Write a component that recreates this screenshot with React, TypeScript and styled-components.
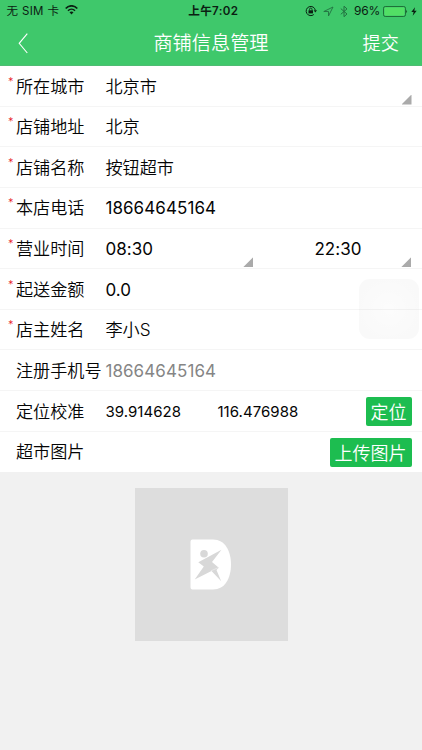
import React from 'react';
import styled, { createGlobalStyle } from 'styled-components';

const GlobalStyle = createGlobalStyle`
  * { box-sizing: border-box; }
  body {
    margin: 0;
    background: #f1f1f1;
    font-family: Inter, "Noto Sans CJK SC", sans-serif;
    color: #050505;
    overflow: hidden;
  }
`;

const Screen = styled.div`
  position: relative;
  width: 422px;
  height: 750px;
  background: #f1f1f1;
  white-space: nowrap;
`;

const Header = styled.header`
  height: 66px;
  background: #3fc86b;
  border-bottom: 1px solid #4fbc73;
`;

const StatusBar = styled.div`
  height: 22px;
  display: grid;
  grid-template-columns: 1fr auto 1fr;
  align-items: center;
  padding: 0 5px 0 6.5px;
  font-size: 11.5px;
  line-height: 22px;
  color: #0b2012;
`;

const Carrier = styled.div`
  display: flex;
  align-items: center;
  gap: 6px;
  letter-spacing: 0.35px;
  svg { margin-top: -2px; }
`;

const Clock = styled.div`
  font-weight: 600;
  font-size: 11.6px;
  letter-spacing: 0.3px;
  padding-left: 3px;
`;

const Indicators = styled.div`
  display: flex;
  align-items: center;
  justify-content: flex-end;
  gap: 6px;
`;

const Power = styled.div`
  display: flex;
  align-items: center;
  gap: 3px;
`;

const Percent = styled.span`
  font-size: 12px;
  letter-spacing: -0.2px;
`;

const NavBar = styled.nav`
  height: 43px;
  display: grid;
  grid-template-columns: 76px 1fr 76px;
  align-items: center;
  color: #fff;
  font-weight: 350;
`;

const Back = styled.button`
  display: flex;
  border: 0;
  background: none;
  padding: 0 0 0 18px;
`;

const Title = styled.h1`
  margin: 0;
  font-size: 19.2px;
  line-height: 38px;
  padding-bottom: 2px;
  font-weight: inherit;
  text-align: center;
`;

const Submit = styled.span`
  font-size: 18.2px;
  line-height: 38px;
  padding: 0 0 2px 16.5px;
`;

const Form = styled.main`
  display: grid;
  grid-template-rows: repeat(10, 40.65px);
  background: #fff;
`;

const Row = styled.section`
  display: grid;
  grid-template-columns: 89.5px 1fr;
  align-items: center;
  padding: 0 10.5px 0 15.9px;
  border-bottom: 1px solid #f5f5f5;
  &:last-child { border-bottom: 0; }
`;

const Label = styled.label<{ $required?: boolean }>`
  position: relative;
  font-size: 17.15px;
  font-weight: 350;
  line-height: 40px;
  padding-top: 0.5px;
  &::before {
    content: ${p => (p.$required ? '"*"' : 'none')};
    position: absolute;
    left: -8px;
    top: -2.5px;
    font-size: 11px;
    line-height: 36px;
    color: #e60f18;
  }
`;

const Fields = styled.div`
  display: flex;
  align-items: center;
  height: 100%;
`;

const Value = styled.span<{ $muted?: boolean; $width?: number; $indent?: number; $small?: boolean; $latin?: boolean }>`
  width: ${p => (p.$width ? `${p.$width}px` : 'auto')};
  flex: ${p => (p.$width ? 'none' : '1')};
  padding: 0.5px 0 0 ${p => p.$indent ?? 0}px;
  font-size: ${p => (p.$small ? '15px' : p.$latin ? '17px' : '17.15px')};
  font-weight: ${p => (p.$latin || p.$small ? 400 : 350)};
  letter-spacing: ${p => (p.$small ? '0.05px' : p.$latin ? '0.08px' : '0')};
  line-height: 40px;
  color: ${p => (p.$muted ? '#858585' : 'inherit')};
`;

const Corner = styled.i`
  align-self: flex-end;
  width: 10px;
  height: 10px;
  margin-bottom: 2px;
  background: #aaa;
  clip-path: polygon(100% 0, 100% 100%, 0 100%);
`;

const Action = styled.button<{ $width: number }>`
  width: ${p => p.$width}px;
  height: 29px;
  margin-left: auto;
  padding: 0;
  border: 0;
  border-radius: 2px;
  background: #1dbd50;
  color: #fff;
  font: 350 18px/28px "Noto Sans CJK SC", sans-serif;
`;

const AssistiveTouch = styled.div`
  position: absolute;
  left: 359px;
  top: 279px;
  width: 60px;
  height: 60px;
  border-radius: 11px;
  background: radial-gradient(circle, rgba(0, 0, 0, 0.012), rgba(0, 0, 0, 0.026));
`;

const Preview = styled.figure`
  width: 153px;
  height: 153px;
  margin: 16px auto 0;
  background: #ddd;
  display: flex;
  align-items: center;
  justify-content: center;
`;

const WifiIcon = () => (
  <svg width="13" height="10" viewBox="0 0 13 10" fill="none" stroke="#0b2012">
    <path d="M.7 3.5C4-.1 9-.1 12.3 3.5" strokeWidth="1.7" />
    <path d="M3 5.7C5 3.7 8 3.7 10 5.7" strokeWidth="1.6" />
    <path d="M4.5 7.3C5.7 6.3 7.3 6.3 8.5 7.3L6.5 9.4Z" fill="#0b2012" stroke="none" />
  </svg>
);

const LockIcon = () => (
  <svg width="12" height="12" viewBox="0 0 12 12" fill="none" stroke="#0b2012">
    <path d="M8.8 9.5A4.6 4.6 0 1 1 10.3 5.2" strokeWidth="1" />
    <path d="M8.7 5.2H12L10.3 7.6Z" fill="#0b2012" stroke="none" />
    <path d="M3.5 5.3H8V8.4H3.5Z" fill="#0b2012" stroke="none" />
    <path d="M4.5 5.4V4.3a1.25 1.25 0 0 1 2.5 0V5.4" strokeWidth=".8" />
  </svg>
);

const LocationIcon = () => (
  <svg width="11" height="11" viewBox="0 0 11 11" fill="none" stroke="#227141" strokeWidth=".9">
    <path d="M.8 5.5L10 1L5.5 10V5.5Z" />
  </svg>
);

const BluetoothIcon = () => (
  <svg width="8" height="13" viewBox="0 0 8 13" fill="none" stroke="#227141" strokeWidth="1">
    <path d="M.8 3.6L7 9L4 11.7V1.2L7 3.9L.8 9.3" />
  </svg>
);

const BatteryIcon = () => (
  <svg width="25" height="11" viewBox="0 0 25 11">
    <rect x=".5" y=".5" width="22" height="10" rx="1.8" fill="none" stroke="#155b2c" strokeWidth=".8" />
    <rect x="1.6" y="1.6" width="19.8" height="7.8" rx=".8" fill="#52df65" />
    <path d="M23.4 3.8Q24.8 5.5 23.4 7.2Z" fill="#0b2012" />
  </svg>
);

const BoltIcon = () => (
  <svg width="6" height="9" viewBox="0 0 6 9">
    <path d="M4 .3L.3 5H2.6L1.7 8.7L5.7 3.7H3.3Z" fill="#0b2012" />
  </svg>
);

const BackIcon = () => (
  <svg width="11" height="21" viewBox="0 0 11 21" fill="none" stroke="#fff" strokeWidth="1.1">
    <path d="M9.3 .7L1.2 10.3L9.3 20" />
  </svg>
);

const BrandMark = () => (
  <svg width="42" height="51" viewBox="0 0 42 51">
    <path d="M2.5.5H23C35 .5 41 12 41 25.5S35 50.5 23 50.5H2.5Q.5 50.5.5 48.5V2.5Q.5.5 2.5.5Z" fill="#fff" />
    <g fill="#d8d8d8">
      <circle cx="14" cy="14.7" r="3.8" />
      <path d="M8.3 23.3L31.5 10.7L22 23L28.8 28.8L26.5 31L31.2 42.2L21.5 32L4.7 40.5L13.8 27.4Z" />
    </g>
    <path d="M21 31.8L28 28.8" stroke="#f1f1f1" strokeWidth=".6" />
  </svg>
);

export default function App() {
  return (
    <Screen>
      <GlobalStyle />
      <Header>
        <StatusBar>
          <Carrier>无 SIM 卡<WifiIcon /></Carrier>
          <Clock>上午7:02</Clock>
          <Indicators>
            <LockIcon /><LocationIcon /><BluetoothIcon />
            <Power><Percent>96%</Percent><BatteryIcon /><BoltIcon /></Power>
          </Indicators>
        </StatusBar>
        <NavBar>
          <Back aria-label="返回"><BackIcon /></Back>
          <Title>商铺信息管理</Title>
          <Submit>提交</Submit>
        </NavBar>
      </Header>
      <Form>
        <Row><Label $required>所在城市</Label><Fields><Value>北京市</Value><Corner /></Fields></Row>
        <Row><Label $required>店铺地址</Label><Fields><Value>北京</Value></Fields></Row>
        <Row><Label $required>店铺名称</Label><Fields><Value>按钮超市</Value></Fields></Row>
        <Row><Label $required>本店电话</Label><Fields><Value $latin>18664645164</Value></Fields></Row>
        <Row>
          <Label $required>营业时间</Label>
          <Fields>
            <Value $latin $width={138}>08:30</Value><Corner />
            <Value $latin $width={148} $indent={61}>22:30</Value><Corner />
          </Fields>
        </Row>
        <Row><Label $required>起送金额</Label><Fields><Value $latin>0.0</Value></Fields></Row>
        <Row><Label $required>店主姓名</Label><Fields><Value>李小S</Value></Fields></Row>
        <Row><Label>注册手机号</Label><Fields><Value $latin $muted>18664645164</Value></Fields></Row>
        <Row>
          <Label>定位校准</Label>
          <Fields>
            <Value $small $width={112}>39.914628</Value>
            <Value $small $width={100}>116.476988</Value>
            <Action $width={46}>定位</Action>
          </Fields>
        </Row>
        <Row><Label>超市图片</Label><Fields><Action $width={82}>上传图片</Action></Fields></Row>
      </Form>
      <Preview><BrandMark /></Preview>
      <AssistiveTouch />
    </Screen>
  );
}
